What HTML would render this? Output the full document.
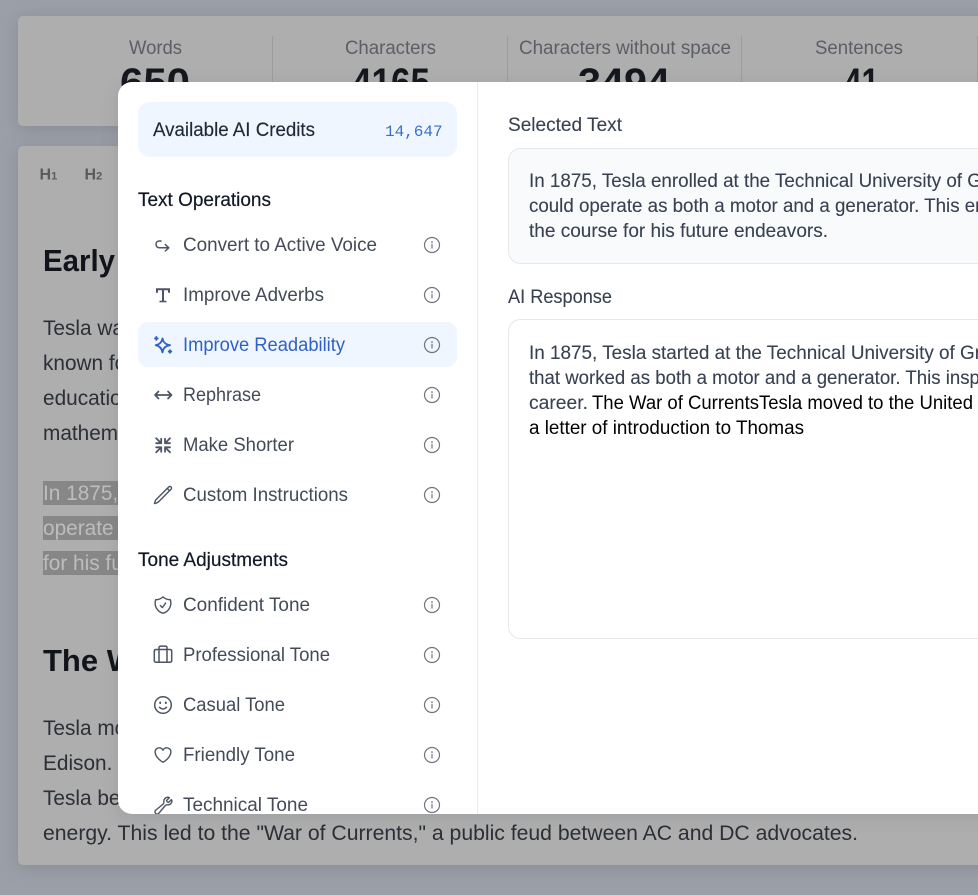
<!DOCTYPE html>
<html lang="en"><head><meta charset="utf-8"><title>AI Writing Assistant</title>
<style>
html,body{margin:0;padding:0;width:978px;height:895px;overflow:hidden;background:#9b9fa8}
svg{display:block}
text{font-family:"Liberation Sans",sans-serif;white-space:pre}
.stat{font-size:19.3px;fill:#5b5f65}
.num{font-size:40px;font-weight:700;fill:#14171d}
.body{font-size:21.5px;fill:#2b2f36}
.par{font-size:20.8px;fill:#2b2f36}
.sel{font-size:20.8px;fill:#bdbdbd}
.h{font-size:31px;font-weight:700;fill:#11141a}
.tb{font-weight:700;fill:#585a5e}
.item{font-size:19.3px;fill:#434b58}
.sec{font-size:19px;fill:#111827;stroke:#111827;stroke-width:.2}
.lab{font-size:19px;fill:#374151;stroke:#374151;stroke-width:.1}
.para{font-size:19.3px;fill:#374151;stroke:#374151;stroke-width:.1}
.ic{fill:none;stroke:#4b5563;stroke-width:1.5;stroke-linecap:round;stroke-linejoin:round}
</style></head>
<body>
<svg width="978" height="895" viewBox="0 0 978 895" xmlns="http://www.w3.org/2000/svg">
<defs>
<clipPath id="m"><rect x="118" y="82" width="900" height="732" rx="14"/></clipPath>
<g id="info" fill="none" stroke="#70757d" stroke-width="1.2" stroke-linecap="round"><circle r="7.500"/><path d="M0 -.6V3"/><path d="M0 -3.100v.3" stroke-width="1.500"/></g>
</defs>

<!-- Background cards -->
<rect x="18" y="16" width="1000" height="110" rx="5" fill="#aeaeae" style="filter:drop-shadow(0 3px 8px rgba(120,124,132,.55))"/>
<rect x="18" y="146" width="1000" height="719" rx="5" fill="#aeaeae" style="filter:drop-shadow(0 3px 8px rgba(120,124,132,.55))"/>
<path d="M272.500 36V90M507.500 36V90M741.500 36V90M977.500 36V90" stroke="#9d9d9d"/>

<text class="stat" x="129" y="54" textLength="53" lengthAdjust="spacingAndGlyphs">Words</text>
<text class="stat" x="345" y="54" textLength="91" lengthAdjust="spacingAndGlyphs">Characters</text>
<text class="stat" x="519" y="54" textLength="212" lengthAdjust="spacingAndGlyphs">Characters without space</text>
<text class="stat" x="815" y="54" textLength="88" lengthAdjust="spacingAndGlyphs">Sentences</text>
<text class="num" x="120" y="96" textLength="70" lengthAdjust="spacingAndGlyphs">650</text>
<text class="num" x="352" y="96" textLength="78" lengthAdjust="spacingAndGlyphs">4165</text>
<text class="num" x="578" y="96" textLength="92" lengthAdjust="spacingAndGlyphs">3494</text>
<text class="num" x="844" y="96" textLength="35" lengthAdjust="spacingAndGlyphs">41</text>

<text class="tb" x="39.500" y="179.500" font-size="16">H<tspan font-size="11">1</tspan></text>
<text class="tb" x="84.500" y="179.500" font-size="16">H<tspan font-size="11">2</tspan></text>

<text class="h" x="43" y="271" textLength="72" lengthAdjust="spacingAndGlyphs">Early</text>
<text class="par" x="43" y="335">Tesla was</text>
<text class="par" x="43" y="370">known for</text>
<text class="par" x="43" y="405">education</text>
<text class="par" x="43" y="440">mathematics</text>
<rect x="43" y="481" width="80" height="24" fill="#878787"/>
<rect x="43" y="516" width="80" height="24" fill="#878787"/>
<rect x="43" y="551" width="80" height="24" fill="#878787"/>
<text class="sel" x="43" y="500">In 1875, T</text>
<text class="sel" x="43" y="535">operate as</text>
<text class="sel" x="43" y="570">for his future</text>
<text class="h" x="43" y="671">The War</text>
<text class="par" x="43" y="735">Tesla moved</text>
<text class="par" x="43" y="770">Edison.</text>
<text class="par" x="43" y="805">Tesla became</text>
<text class="body" x="43" y="840" textLength="815" lengthAdjust="spacingAndGlyphs">energy. This led to the "War of Currents," a public feud between AC and DC advocates.</text>

<!-- Modal -->
<rect x="118" y="82" width="900" height="732" rx="14" fill="#fff" style="filter:drop-shadow(0 3px 8px rgba(70,75,85,.15))"/>
<g clip-path="url(#m)">
<path d="M477.500 82V814" stroke="#e8eaee"/>

<rect x="138" y="102" width="319" height="55" rx="12" fill="#eff6ff"/>
<text x="153" y="136" font-size="19" fill="#1f2937" stroke="#1f2937" stroke-width=".15" textLength="162" lengthAdjust="spacingAndGlyphs">Available AI Credits</text>
<text x="385" y="136" font-size="16" fill="#3b6fc9" style="font-family:'Liberation Mono',monospace">14,647</text>

<text class="sec" x="138" y="206" textLength="133" lengthAdjust="spacingAndGlyphs">Text Operations</text>

<text class="item" x="183" y="251" textLength="194" lengthAdjust="spacingAndGlyphs">Convert to Active Voice</text>
<text class="item" x="183" y="301" textLength="141" lengthAdjust="spacingAndGlyphs">Improve Adverbs</text>
<rect x="138" y="322" width="319" height="45" rx="10" fill="#eff6ff"/>
<text class="item" x="183" y="351" textLength="162" lengthAdjust="spacingAndGlyphs" style="fill:#2f62c4">Improve Readability</text>
<text class="item" x="183" y="401" textLength="78" lengthAdjust="spacingAndGlyphs">Rephrase</text>
<text class="item" x="183" y="451" textLength="111" lengthAdjust="spacingAndGlyphs">Make Shorter</text>
<text class="item" x="183" y="501" textLength="165" lengthAdjust="spacingAndGlyphs">Custom Instructions</text>

<text class="sec" x="138" y="566" textLength="150" lengthAdjust="spacingAndGlyphs">Tone Adjustments</text>

<text class="item" x="183" y="611" textLength="127" lengthAdjust="spacingAndGlyphs">Confident Tone</text>
<text class="item" x="183" y="661" textLength="147" lengthAdjust="spacingAndGlyphs">Professional Tone</text>
<text class="item" x="183" y="711" textLength="102" lengthAdjust="spacingAndGlyphs">Casual Tone</text>
<text class="item" x="183" y="761" textLength="112" lengthAdjust="spacingAndGlyphs">Friendly Tone</text>
<text class="item" x="183" y="811" textLength="125" lengthAdjust="spacingAndGlyphs">Technical Tone</text>

<!-- Info icons -->
<use href="#info" x="432" y="245"/><use href="#info" x="432" y="295"/><use href="#info" x="432" y="345"/>
<use href="#info" x="432" y="395"/><use href="#info" x="432" y="445"/><use href="#info" x="432" y="495"/>
<use href="#info" x="432" y="605"/><use href="#info" x="432" y="655"/><use href="#info" x="432" y="705"/>
<use href="#info" x="432" y="755"/><use href="#info" x="432" y="805"/>

<!-- Left icons -->
<path class="ic" d="M161 241H159.500C157.300 241 156 242.400 156 244.300C156 246.300 157.500 247.800 159.500 247.800H168.500M165.300 244.500L168.800 247.800L165.300 251"/>
<path class="ic" style="stroke-width:2;stroke-linecap:butt;stroke-linejoin:miter" d="M157 292.800V289.200H169V292.800M163 289.200V301.500"/>
<path class="ic" style="stroke-width:1.600;stroke-linecap:butt" d="M159.500 301.500H166.500"/>
<g fill="none" stroke="#2f62c4" stroke-width="1.900" stroke-linejoin="round" stroke-linecap="round"><path d="M162.500 338.500C163.300 342.500 165.300 344.500 170 345.200C165.300 346 163.300 348 162.500 352.300C161.700 348 159.700 346 155.800 345.200C159.700 344.500 161.700 342.500 162.500 338.500Z"/><path d="M156.300 337V339.800M155 338.400H157.700M170 350.200V352.800M168.700 351.500H171.300"/></g>
<path class="ic" style="stroke-width:1.700" d="M155 395H171.500M158.500 391.500L155 395L158.500 398.500M168 391.500L171.500 395L168 398.500"/>
<path class="ic" style="stroke-width:1.800" d="M156.200 438.200L160.700 442.700M156.200 443.200H161.200V438.800M170 438.200L165.500 442.700M165 438.800V443.200H170M156.200 452.300L160.700 447.800M156.200 447.300H161.200V451.800M170 452.300L165.500 447.800M165 451.800V447.300H170"/>
<g transform="translate(152.500 484.500) scale(.875)"><path class="ic" style="stroke-width:1.600" d="M16.862 4.487l1.687-1.688a1.875 1.875 0 112.652 2.652L6.832 19.820a4.500 4.500 0 01-1.897 1.130l-2.685.8.8-2.685a4.500 4.500 0 011.130-1.897L16.863 4.487zm0 0L19.500 7.125"/></g>
<g transform="translate(152.500 594.500) scale(.875)"><path class="ic" style="stroke-width:1.600" d="M9 12.750L11.250 15 15 9.750m-3-7.036A11.959 11.959 0 013.598 6 11.990 11.990 0 003 9.749c0 5.592 3.824 10.290 9 11.623 5.176-1.332 9-6.030 9-11.622 0-1.310-.21-2.571-.598-3.751h-.152c-3.196 0-6.100-1.248-8.250-3.285z"/></g>
<path class="ic" d="M156 649.500H170C171 649.500 171.700 650.200 171.700 651.200V660.500C171.700 661.500 171 662.200 170 662.200H156C155 662.200 154.300 661.500 154.300 660.500V651.200C154.300 650.200 155 649.500 156 649.500ZM159 649.500V647.800C159 646.800 159.700 646.100 160.700 646.100H165.300C166.300 646.100 167 646.800 167 647.800V649.500M159 649.500V662.200M167 649.500V662.200"/>
<g class="ic"><circle cx="163" cy="705" r="8.300"/><path d="M159.500 707.300C161.500 709.500 164.500 709.500 166.500 707.300"/><path d="M160.200 702.500v.6M165.800 702.500v.6" style="stroke-width:1.900"/></g>
<g transform="translate(152.500 744.500) scale(.875)"><path class="ic" style="stroke-width:1.600" d="M21 8.250c0-2.485-2.099-4.500-4.688-4.500-1.935 0-3.597 1.126-4.312 2.733-.715-1.607-2.377-2.733-4.313-2.733C5.100 3.750 3 5.765 3 8.250c0 7.220 9 12 9 12s9-4.780 9-12z"/></g>
<g transform="translate(153 795) scale(.875)"><path class="ic" style="stroke-width:1.600" d="M21.750 6.750a4.500 4.500 0 01-4.884 4.484c-1.076-.091-2.264.071-2.950.904l-7.152 8.684a2.548 2.548 0 11-3.932-3.242l8.684-7.151c.833-.686.995-1.874.904-2.950a4.500 4.500 0 016.336-4.486l-3.276 3.276a3.004 3.004 0 002.250 2.250l3.276-3.276c.256.565.398 1.192.398 1.852z"/></g>

<!-- Right panel -->
<text class="lab" x="508" y="131" textLength="114" lengthAdjust="spacingAndGlyphs">Selected Text</text>
<rect x="508.500" y="148.500" width="540" height="115" rx="12" fill="#f9fafb" stroke="#e5e7eb"/>
<text class="para" x="529" y="187" textLength="479" lengthAdjust="spacingAndGlyphs">In 1875, Tesla enrolled at the Technical University of Graz</text>
<text class="para" x="529" y="212" textLength="467" lengthAdjust="spacingAndGlyphs">could operate as both a motor and a generator. This eng</text>
<text class="para" x="529" y="237" textLength="299" lengthAdjust="spacingAndGlyphs">the course for his future endeavors.</text>

<text class="lab" x="508" y="303" textLength="104" lengthAdjust="spacingAndGlyphs">AI Response</text>
<rect x="508.500" y="319.500" width="540" height="319" rx="12" fill="#fff" stroke="#e5e7eb"/>
<text class="para" x="529" y="359" textLength="472" lengthAdjust="spacingAndGlyphs">In 1875, Tesla started at the Technical University of Graz</text>
<text class="para" x="529" y="384" textLength="455" lengthAdjust="spacingAndGlyphs">that worked as both a motor and a generator. This inspi</text>
<text class="para" x="529" y="409" textLength="59" lengthAdjust="spacingAndGlyphs">career.</text>
<text x="592" y="409" font-size="19.300" fill="#000" textLength="381" lengthAdjust="spacingAndGlyphs">The War of CurrentsTesla moved to the United</text>
<text x="529" y="434" font-size="19.300" fill="#000" textLength="275" lengthAdjust="spacingAndGlyphs">a letter of introduction to Thomas</text>
</g>
</svg>
</body></html>
